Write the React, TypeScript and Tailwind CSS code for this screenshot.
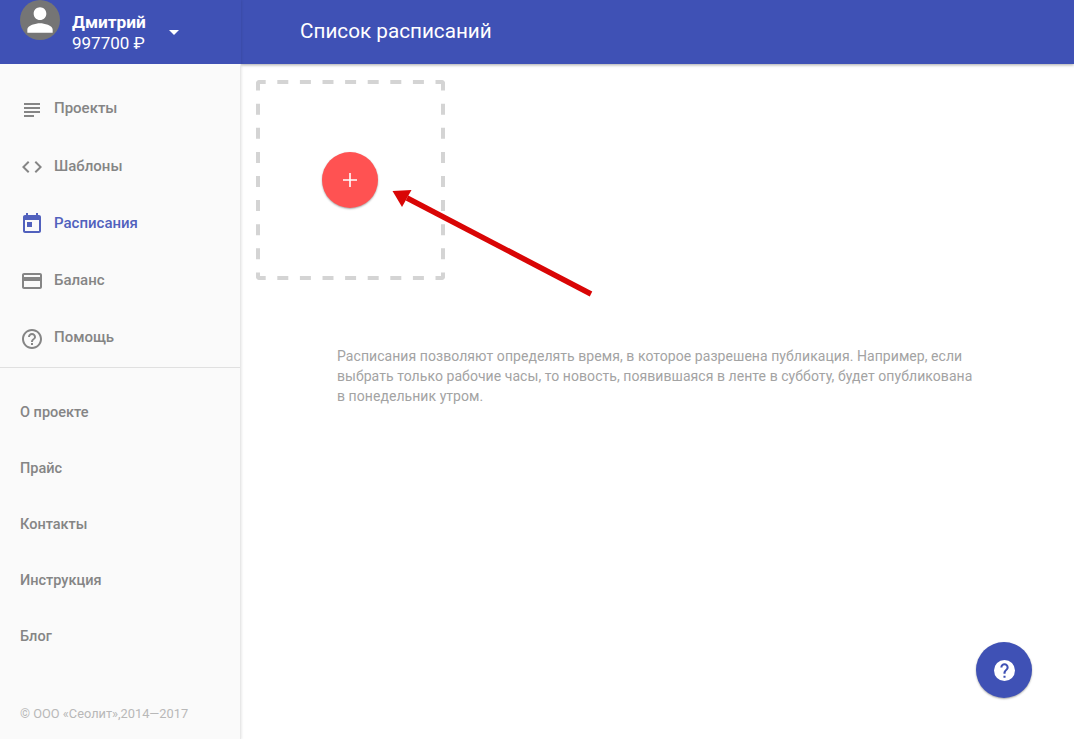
const NAV = [
  { label: 'Проекты', d: 'M14 17H4v2h10v-2zm6-8H4v2h16V9zM4 15h16v-2H4v2zM4 5v2h16V5H4z' },
  { label: 'Шаблоны', d: 'M9.4 16.6L4.8 12l4.6-4.6L8 6l-6 6 6 6 1.4-1.4zm5.2 0l4.6-4.6-4.6-4.6L16 6l6 6-6 6-1.4-1.4z' },
  {
    label: 'Расписания',
    active: true,
    d: 'M19 3h-1V1h-2v2H8V1H6v2H5c-1.11 0-1.99.9-1.99 2L3 19c0 1.1.89 2 2 2h14c1.1 0 2-.9 2-2V5c0-1.1-.9-2-2-2zm0 16H5V8h14v11zM7 10h5v5H7z',
  },
  {
    label: 'Баланс',
    d: 'M20 4H4c-1.11 0-1.99.89-1.99 2L2 18c0 1.11.89 2 2 2h16c1.11 0 2-.89 2-2V6c0-1.11-.89-2-2-2zm0 14H4v-6h16v6zm0-10H4V6h16v2z',
  },
  {
    label: 'Помощь',
    d: 'M11 18h2v-2h-2v2zm1-16C6.48 2 2 6.48 2 12s4.48 10 10 10 10-4.48 10-10S17.52 2 12 2zm0 18c-4.41 0-8-3.59-8-8s3.59-8 8-8 8 3.59 8 8-3.59 8-8 8zm0-14c-2.21 0-4 1.79-4 4h2c0-1.1.9-2 2-2s2 .9 2 2c0 2-3 1.75-3 5h2c0-2.25 3-2.5 3-5 0-2.21-1.79-4-4-4z',
  },
]
const LINKS = ['О проекте', 'Прайс', 'Контакты', 'Инструкция', 'Блог']

export default function App() {
  return (
    <div className="relative flex h-[739px] w-full overflow-hidden bg-white font-['Roboto',sans-serif]">
      {/* левая колонка */}
      <aside className="z-20 flex w-[241px] shrink-0 flex-col border-r border-[#e8e8e8] bg-[#fafafa] shadow-[1px_0_2px_rgba(0,0,0,0.08)]">
        <div className="-mr-px flex h-16 items-start bg-[#3f51b5] pl-5 text-white">
          <div className="flex h-10 w-10 items-center justify-center rounded-full bg-[#757575]">
            <svg viewBox="0 0 24 24" className="h-[38px] w-[38px] fill-white">
              <path d="M12 12c2.21 0 4-1.79 4-4s-1.79-4-4-4-4 1.79-4 4 1.79 4 4 4zm0 2c-2.67 0-8 1.34-8 4v2h16v-2c0-2.66-5.33-4-8-4z" />
            </svg>
          </div>
          <div className="ml-3 pt-[12px]">
            <div className="text-[17.3px] leading-[21px] font-bold">Дмитрий</div>
            <div className="text-[17px] leading-[21px]">997700 ₽</div>
          </div>
          <div className="mt-[30px] ml-[23px] h-0 w-0 border-x-[5.5px] border-t-[5px] border-x-transparent border-t-white" />
        </div>

        <nav className="flex h-[304px] flex-col border-b border-[#e0e0e0] pt-4">
          {NAV.map((item) => (
            <div
              key={item.label}
              className={`flex h-[57.25px] items-center gap-[10px] pl-5 text-[15px] font-medium ${
                item.active ? 'text-[#5161bd] fill-[#5161bd]' : 'text-[#858585] fill-[#858585]'
              }`}
            >
              <svg viewBox="0 0 24 24" className="mt-[2px] h-6 w-6">
                <path d={item.d} />
              </svg>
              <span>{item.label}</span>
            </div>
          ))}
        </nav>

        <div className="flex flex-col pt-[17px]">
          {LINKS.map((link) => (
            <div key={link} className="flex h-14 items-center pl-5 text-[14.5px] font-medium text-[#858585]">
              {link}
            </div>
          ))}
        </div>

        <div className="mt-auto pb-[18px] pl-5 text-[12.8px] leading-[14px] text-[#b8b8b8]">© ООО «Сеолит»,2014—2017</div>
      </aside>

      <main className="flex min-w-0 flex-1 flex-col">
        <header className="z-10 flex h-16 items-center bg-[#3f51b5] pl-[59px] text-[20.7px] text-white shadow-[0_1px_3px_rgba(0,0,0,0.35)]">
          Список расписаний
        </header>

        <div className="relative ml-[15px] mt-4 flex h-[200px] w-[189px] items-center justify-center overflow-hidden rounded-[4px]">
          <svg viewBox="0 0 189 200" className="absolute inset-0 h-full w-full fill-none stroke-[#d4d4d4] stroke-[4]">
            <path d="M0 2H189M0 198H189" strokeDasharray="11 11.6" strokeDashoffset="1.3" />
            <path d="M2 0V200M187 0V200" strokeDasharray="11 13.1" strokeDashoffset="0.4" />
          </svg>
          <div className="mr-px flex h-14 w-14 items-center justify-center rounded-full bg-[#ff5252] shadow-[0_1px_2px_rgba(0,0,0,0.35)]">
            <svg viewBox="0 0 14 14" className="h-[14px] w-[14px] fill-white">
              <path d="M6.2 0h1.6v6.2H14v1.6H7.8V14H6.2V7.8H0V6.2h6.2z" />
            </svg>
          </div>
        </div>

        <p className="ml-[96px] mt-[66px] w-[640px] text-[14px] leading-[20px] tracking-[0.06px] text-[#a3a3a3]">
          Расписания позволяют определять время, в которое разрешена публикация. Например, если выбрать только рабочие
          часы, то новость, появившаяся в ленте в субботу, будет опубликована в понедельник утром.
        </p>
      </main>

      {/* стрелка поверх контента */}
      <svg className="absolute top-[180px] left-[385px] z-30 h-[125px] w-[215px]" viewBox="0 0 215 125">
        <path d="M206 114 L22 18" stroke="#d90505" strokeWidth="5.5" fill="none" />
        <path d="M7.5 11 L26.5 10 L17 27 Z" fill="#d90505" />
      </svg>

      <button className="absolute top-[642px] left-[976px] z-30 flex h-14 w-14 items-center justify-center rounded-full bg-[#3f51b5] shadow-[0_1px_2px_rgba(0,0,0,0.35)]">
        <span className="flex h-[21px] w-[21px] items-center justify-center rounded-full bg-white">
          <svg viewBox="0 0 24 24" className="h-[25px] w-[25px] shrink-0 fill-[#3f51b5]">
            <path d="M11 19h2v-2h-2v2zm4.07-7.75l-.9.92C13.45 12.9 13 13.5 13 15h-2v-.5c0-1.1.45-2.1 1.17-2.83l1.24-1.26c.37-.36.59-.86.59-1.41 0-1.1-.9-2-2-2s-2 .9-2 2H8c0-2.21 1.79-4 4-4s4 1.79 4 4c0 .88-.36 1.68-.93 2.25z" />
          </svg>
        </span>
      </button>
    </div>
  )
}
